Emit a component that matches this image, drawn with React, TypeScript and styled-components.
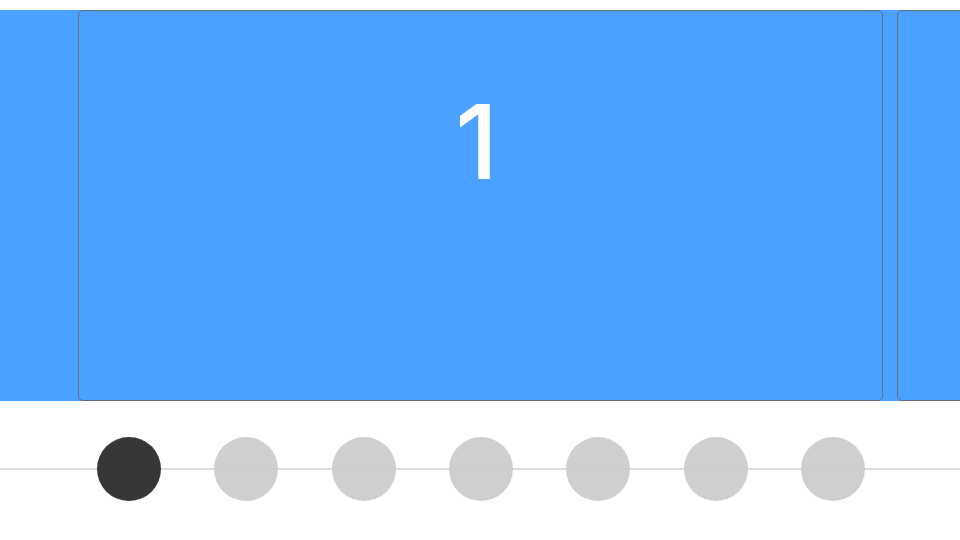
import React from 'react';
import styled, { createGlobalStyle } from 'styled-components';

const GlobalStyle = createGlobalStyle`
  html, body {
    margin: 0;
    padding: 0;
    background: #ffffff;
    font-family: "Liberation Sans", sans-serif;
  }
`;

const Page = styled.div`
  width: 960px;
  height: 540px;
  padding-top: 10px;
  box-sizing: border-box;
  overflow: hidden;
`;

const Track = styled.div`
  display: flex;
  gap: 14px;
  height: 391px;
  padding-left: 78px;
  background: #4aa1ff;
  overflow: hidden;
`;

const Slide = styled.div`
  flex: none;
  width: 805px;
  height: 100%;
  box-sizing: border-box;
  border: 1px solid #666d75;
  border-radius: 5px;
  background: #4aa1ff;
  color: #ffffff;
  display: flex;
  justify-content: center;
  padding-top: 79px;
  padding-right: 8px;
  font-family: Inter, "Liberation Sans", sans-serif;
  font-size: 103px;
  font-weight: 500;
  line-height: 1;
`;

const Pager = styled.div`
  position: relative;
  display: flex;
  justify-content: center;
  gap: 53.3px;
  padding-top: 36px;
  padding-left: 2px;

  &::before {
    content: '';
    position: absolute;
    left: 0;
    right: 0;
    top: 67px;
    height: 2px;
    background: #dddddd;
  }
`;

const Dot = styled.span<{ $active?: boolean }>`
  position: relative;
  width: 64px;
  height: 64px;
  border-radius: 50%;
  background: ${({ $active }) => ($active ? 'rgba(51, 51, 51, 0.98)' : 'rgba(204, 204, 204, 0.95)')};
`;

const slides = [1, 2, 3];
const dots = [0, 1, 2, 3, 4, 5, 6];
const current = 0;

export default function App() {
  return (
    <>
      <GlobalStyle />
      <Page>
        <Track>
          {slides.map((n, i) => (
            // only the slide in view renders its label
            <Slide key={n}>{i === current ? n : null}</Slide>
          ))}
        </Track>
        <Pager>
          {dots.map((i) => (
            <Dot key={i} $active={i === current} />
          ))}
        </Pager>
      </Page>
    </>
  );
}
